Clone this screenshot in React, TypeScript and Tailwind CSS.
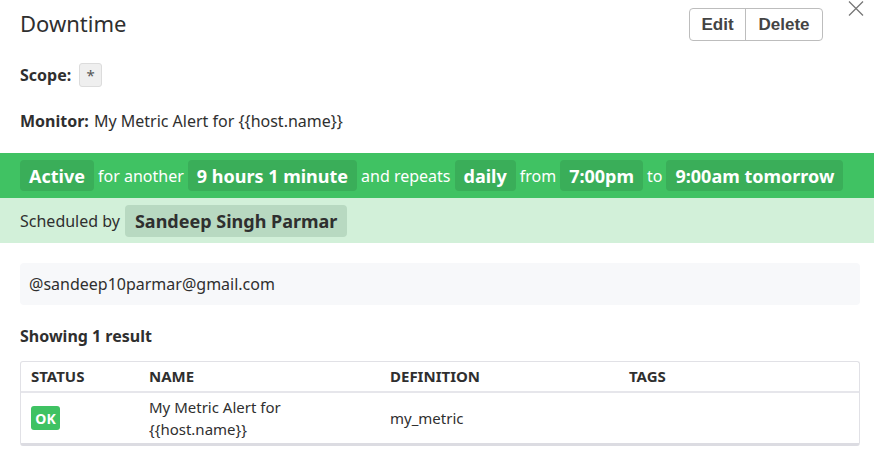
const Chip = ({ children }: { children: React.ReactNode }) => (
  <span className="flex h-[31px] shrink-0 items-center whitespace-nowrap rounded-[4px] bg-[#3aae59] px-[9px] text-[18px] font-bold leading-none text-white">
    {children}
  </span>
);

const Word = ({ children }: { children: React.ReactNode }) => (
  <span className="shrink-0 whitespace-nowrap">{children}</span>
);

export default function App() {
  return (
    <div className="relative h-[458px] w-[874px] overflow-hidden bg-white font-['Noto_Sans',sans-serif] text-[#2f2f2f]">
      <button className="absolute right-[10px] top-px text-[#777]">
        <svg width="16" height="15" viewBox="0 0 16 15" fill="none" stroke="currentColor" strokeWidth="1.3">
          <path d="M1 0.5 L15 14.5 M15 0.5 L1 14.5" />
        </svg>
      </button>

      <div className="flex items-center justify-between pl-5 pr-[51px] pt-2">
        <h1 className="-mt-1 text-[22px] leading-none">Downtime</h1>
        <div className="flex h-[33px] overflow-hidden rounded-[4px] border border-[#bdbdbd] font-['Liberation_Sans',sans-serif] text-[17px] font-bold text-[#444]">
          <button className="w-[56px] border-r border-[#bdbdbd]">Edit</button>
          <button className="w-[76px]">Delete</button>
        </div>
      </div>

      <div className="mt-[22px] flex h-6 items-center gap-2 px-5 text-[16px]">
        <span className="font-bold">Scope:</span>
        <span className="flex h-6 w-[23px] items-center justify-center rounded-[3px] border border-[#dcdcdc] bg-[#efefef] text-[15px] text-[#555]">
          *
        </span>
      </div>

      <div className="mt-[22px] flex h-6 items-center px-5 text-[16px]">
        <span className="font-bold">Monitor:</span>
        <span className="ml-[5px]">My Metric Alert for {"{{host.name}}"}</span>
      </div>

      <div className="mt-5 flex h-[45px] items-center gap-[4px] bg-[#40c263] px-5 text-[16px] text-white">
        <Chip>Active</Chip>
        <Word>for another</Word>
        <Chip>9 hours 1 minute</Chip>
        <Word>and repeats</Word>
        <Chip>daily</Chip>
        <Word>from</Word>
        <Chip>7:00pm</Chip>
        <Word>to</Word>
        <Chip>9:00am tomorrow</Chip>
      </div>

      <div className="flex h-[45px] items-center gap-[5px] bg-[#d2f0d9] px-5 text-[16px]">
        <span>Scheduled by</span>
        <span className="flex h-8 items-center rounded-[4px] bg-[#b8d9c1] px-[10px] text-[18px] font-bold leading-none text-[#2f2f2f]">
          Sandeep Singh Parmar
        </span>
      </div>

      <div className="ml-5 mr-[14px] mt-5 flex h-[42px] items-center rounded-[4px] bg-[#f7f8fa] px-[9px] text-[16px]">
        @sandeep10parmar@gmail.com
      </div>

      <div className="mt-[19px] flex h-6 items-center px-5 text-[16px] font-bold">
        Showing 1 result
      </div>

      <div className="ml-5 mr-[14px] mt-[13px] overflow-hidden rounded-[3px] border border-[#e1e1e6] border-b-[3px] border-b-[#dcdce2]">
        <div className="flex h-[31px] items-center border-b-2 border-[#e6e6eb] px-[10px] text-[15px] font-bold uppercase">
          <div className="w-[118px]">Status</div>
          <div className="w-[241px]">Name</div>
          <div className="w-[239px]">Definition</div>
          <div>Tags</div>
        </div>
        <div className="flex h-[50px] items-center px-[10px] text-[15px]">
          <div className="w-[118px]">
            <span className="flex h-6 w-[29px] items-center justify-center rounded-[3px] bg-[#3fc263] text-[14px] font-bold text-white">
              OK
            </span>
          </div>
          <div className="w-[241px] leading-[22px]">
            My Metric Alert for
            <br />
            {"{{host.name}}"}
          </div>
          <div className="w-[239px]">my_metric</div>
          <div></div>
        </div>
      </div>
    </div>
  );
}
